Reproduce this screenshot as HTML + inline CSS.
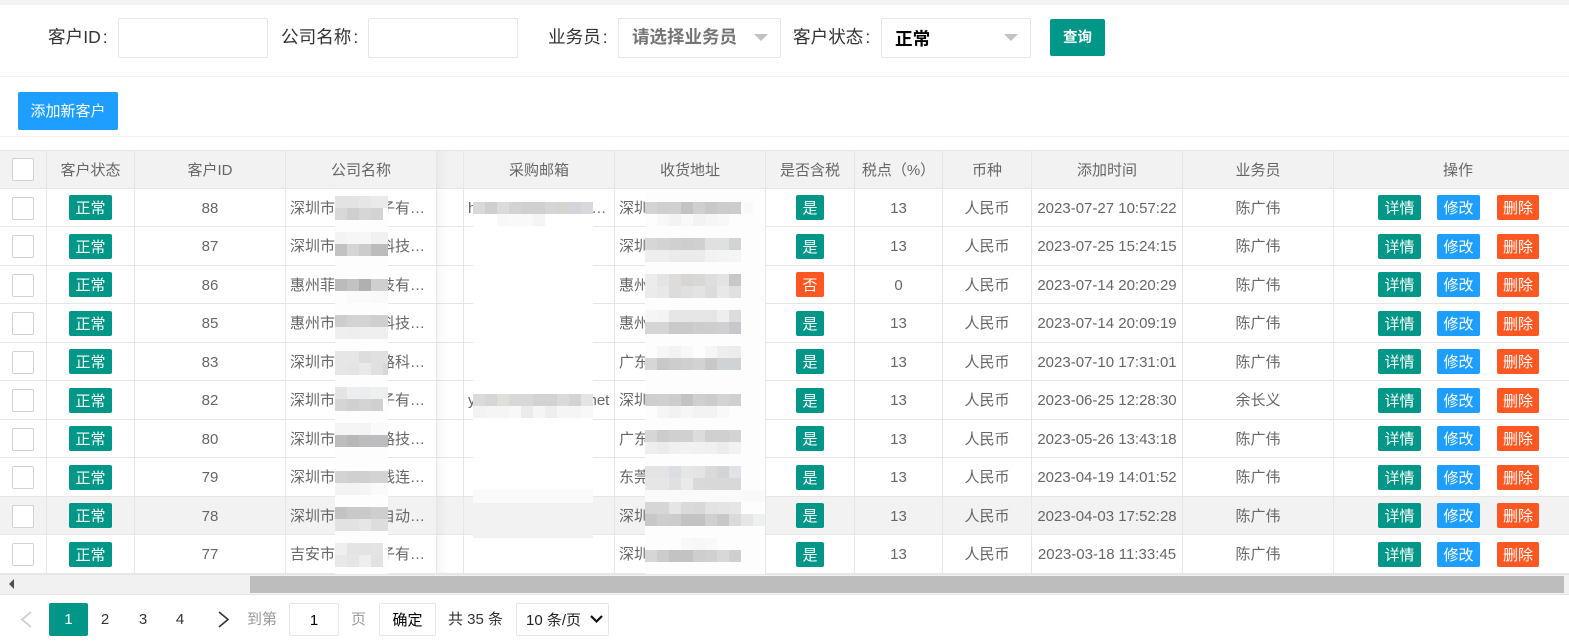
<!DOCTYPE html>
<html lang="zh-CN"><head><meta charset="utf-8"><title>客户列表</title>
<style>
html,body{margin:0;padding:0;background:#fff}
#p{position:relative;width:1569px;height:644px;overflow:hidden;background:#fff;font:15px/1 "Liberation Sans","Noto Sans CJK SC",sans-serif;color:#666}
#p div,#p span.a{position:absolute;box-sizing:border-box;white-space:nowrap}
.box{background:#fff;border:1px solid #e6e6e6;border-radius:2px}
.lb{font-size:17.6px;color:#333;line-height:20px;top:27px}
.lb i{width:2px}
.r{left:0;width:1569px;height:38.5px;border-bottom:1px solid #e6e6e6}
.h{top:150px;height:39px;background:#f2f2f2;border-top:1px solid #e6e6e6}
.h div{line-height:39px}
.r div{top:0;height:100%;line-height:39px;text-align:center;border-right:1px solid #e6e6e6}
.r div.cb,.r div.t,.r div.y,.r div.b{border:0;line-height:27px;height:25px;top:6.5px;color:#fff;border-radius:2px}
.r div.cb{left:12px;width:22px;height:23px;top:8px;background:#fff;border:1px solid #d2d2d2;border-radius:2px}
.h div.cb{top:7px}
.c0{left:0;width:47px}.c1{left:47px;width:88px}.c2{left:135px;width:151px}.c3{left:286px;width:151px}.c4{left:437px;width:27px}.c5{left:464px;width:151px}.c6{left:615px;width:151px}.c7{left:766px;width:89px}.c8{left:855px;width:88px}.c9{left:943px;width:89px}.c10{left:1032px;width:151px}.c11{left:1183px;width:151px}.c12{left:1334px;width:248px}
.r div.l{text-align:left;padding-left:4px;overflow:hidden}
.r div.t{left:69px;width:43px;background:#009688}
.r div.y{left:796px;width:28px;background:#009688}
.r div.n{background:#ff5722}
.r div.b1{left:1378px;width:43px;background:#009688}
.r div.b2{left:1437px;width:43px;background:#1e9fff}
.r div.b3{left:1497px;width:42px;background:#ff5722}
i{display:inline-block}
svg{position:absolute;left:0;top:0}
#m rect{width:12px;height:12px}
.pg{top:603px;line-height:34px;height:33px;text-align:center}
</style></head><body><div id="p">
<div style="left:0;top:0;width:1569px;height:5px;background:#f2f2f2"></div>
<div style="left:0;top:76px;width:1569px;height:1px;background:#f2f2f2"></div>
<div style="left:0;top:136px;width:1569px;height:1px;background:#f2f2f2"></div>

<div class="lb" style="left:48px">客户ID<i></i>:</div>
<div class="box" style="left:118px;top:18px;width:150px;height:40px"></div>
<div class="lb" style="left:281px">公司名称<i></i>:</div>
<div class="box" style="left:368px;top:18px;width:150px;height:40px"></div>
<div class="lb" style="left:548px">业务员<i></i>:</div>
<div class="box" style="left:618px;top:18px;width:163px;height:40px"></div>
<div style="left:632px;top:26px;font-size:17.5px;font-weight:bold;color:#757575;line-height:22px">请选择业务员</div>
<div class="lb" style="left:793px">客户状态<i></i>:</div>
<div class="box" style="left:881px;top:18px;width:150px;height:40px"></div>
<div style="left:895px;top:28px;font-size:17.6px;font-weight:bold;color:#000;line-height:22px">正常</div>
<div style="left:1049px;top:19px;width:55px;height:37px;background:#009688;border-radius:2px;color:#fff;font-size:14.5px;font-weight:bold;line-height:39px;text-align:center;transform:translateX(1px)">查询</div>
<div style="left:18px;top:92px;width:100px;height:38px;background:#1e9fff;border-radius:2px;color:#fff;line-height:39px;text-align:center">添加新客户</div>

<div class="r h"><div class="c0"><div class="cb"></div></div><div class="c1">客户状态</div><div class="c2">客户ID</div><div class="c3">公司名称</div><div class="c4"></div><div class="c5">采购邮箱</div><div class="c6">收货地址</div><div class="c7">是否含税</div><div class="c8">税点（%）</div><div class="c9">币种</div><div class="c10">添加时间</div><div class="c11">业务员</div><div class="c12" style="border:0">操作</div></div>

<div class="r" style="top:188.5px"><div class="c0"></div><div class="cb"></div><div class="c1"></div><div class="t">正常</div><div class="c2">88</div><div class="c3 l">深圳市某某电子有…</div><div class="c4"></div><div class="c5 l">h<i style="width:115px"></i>…</div><div class="c6 l">深圳市</div><div class="c7"></div><div class="y">是</div><div class="c8">13</div><div class="c9">人民币</div><div class="c10">2023-07-27 10:57:22</div><div class="c11">陈广伟</div><div class="b b1">详情</div><div class="b b2">修改</div><div class="b b3">删除</div></div>
<div class="r" style="top:227px"><div class="c0"></div><div class="cb"></div><div class="c1"></div><div class="t">正常</div><div class="c2">87</div><div class="c3 l">深圳市某某电科技…</div><div class="c4"></div><div class="c5 l"></div><div class="c6 l">深圳市</div><div class="c7"></div><div class="y">是</div><div class="c8">13</div><div class="c9">人民币</div><div class="c10">2023-07-25 15:24:15</div><div class="c11">陈广伟</div><div class="b b1">详情</div><div class="b b2">修改</div><div class="b b3">删除</div></div>
<div class="r" style="top:265.5px"><div class="c0"></div><div class="cb"></div><div class="c1"></div><div class="t">正常</div><div class="c2">86</div><div class="c3 l">惠州菲某某科技有…</div><div class="c4"></div><div class="c5 l"></div><div class="c6 l">惠州市</div><div class="c7"></div><div class="y n">否</div><div class="c8">0</div><div class="c9">人民币</div><div class="c10">2023-07-14 20:20:29</div><div class="c11">陈广伟</div><div class="b b1">详情</div><div class="b b2">修改</div><div class="b b3">删除</div></div>
<div class="r" style="top:304px"><div class="c0"></div><div class="cb"></div><div class="c1"></div><div class="t">正常</div><div class="c2">85</div><div class="c3 l">惠州市某某电科技…</div><div class="c4"></div><div class="c5 l"></div><div class="c6 l">惠州市</div><div class="c7"></div><div class="y">是</div><div class="c8">13</div><div class="c9">人民币</div><div class="c10">2023-07-14 20:09:19</div><div class="c11">陈广伟</div><div class="b b1">详情</div><div class="b b2">修改</div><div class="b b3">删除</div></div>
<div class="r" style="top:342.5px"><div class="c0"></div><div class="cb"></div><div class="c1"></div><div class="t">正常</div><div class="c2">83</div><div class="c3 l">深圳市某某网路科…</div><div class="c4"></div><div class="c5 l"></div><div class="c6 l">广东省</div><div class="c7"></div><div class="y">是</div><div class="c8">13</div><div class="c9">人民币</div><div class="c10">2023-07-10 17:31:01</div><div class="c11">陈广伟</div><div class="b b1">详情</div><div class="b b2">修改</div><div class="b b3">删除</div></div>
<div class="r" style="top:381px"><div class="c0"></div><div class="cb"></div><div class="c1"></div><div class="t">正常</div><div class="c2">82</div><div class="c3 l">深圳市某某电子有…</div><div class="c4"></div><div class="c5 l">y<i style="width:113px"></i>net</div><div class="c6 l">深圳市</div><div class="c7"></div><div class="y">是</div><div class="c8">13</div><div class="c9">人民币</div><div class="c10">2023-06-25 12:28:30</div><div class="c11">余长义</div><div class="b b1">详情</div><div class="b b2">修改</div><div class="b b3">删除</div></div>
<div class="r" style="top:419.5px"><div class="c0"></div><div class="cb"></div><div class="c1"></div><div class="t">正常</div><div class="c2">80</div><div class="c3 l">深圳市某某网路技…</div><div class="c4"></div><div class="c5 l"></div><div class="c6 l">广东省</div><div class="c7"></div><div class="y">是</div><div class="c8">13</div><div class="c9">人民币</div><div class="c10">2023-05-26 13:43:18</div><div class="c11">陈广伟</div><div class="b b1">详情</div><div class="b b2">修改</div><div class="b b3">删除</div></div>
<div class="r" style="top:458px"><div class="c0"></div><div class="cb"></div><div class="c1"></div><div class="t">正常</div><div class="c2">79</div><div class="c3 l">深圳市某某无线连…</div><div class="c4"></div><div class="c5 l"></div><div class="c6 l">东莞市</div><div class="c7"></div><div class="y">是</div><div class="c8">13</div><div class="c9">人民币</div><div class="c10">2023-04-19 14:01:52</div><div class="c11">陈广伟</div><div class="b b1">详情</div><div class="b b2">修改</div><div class="b b3">删除</div></div>
<div class="r" style="top:496.5px;background:#f2f2f2"><div class="c0"></div><div class="cb"></div><div class="c1"></div><div class="t">正常</div><div class="c2">78</div><div class="c3 l">深圳市某某自自动…</div><div class="c4"></div><div class="c5 l"></div><div class="c6 l">深圳市</div><div class="c7"></div><div class="y">是</div><div class="c8">13</div><div class="c9">人民币</div><div class="c10">2023-04-03 17:52:28</div><div class="c11">陈广伟</div><div class="b b1">详情</div><div class="b b2">修改</div><div class="b b3">删除</div></div>
<div class="r" style="top:535px"><div class="c0"></div><div class="cb"></div><div class="c1"></div><div class="t">正常</div><div class="c2">77</div><div class="c3 l">吉安市某某电子有…</div><div class="c4"></div><div class="c5 l"></div><div class="c6 l">深圳市</div><div class="c7"></div><div class="y">是</div><div class="c8">13</div><div class="c9">人民币</div><div class="c10">2023-03-18 11:33:45</div><div class="c11">陈广伟</div><div class="b b1">详情</div><div class="b b2">修改</div><div class="b b3">删除</div></div>

<div style="left:437px;top:151px;width:10px;height:423px;background:linear-gradient(90deg,rgba(0,0,0,.035),rgba(0,0,0,0))"></div>

<svg id="m" width="1569" height="644" shape-rendering="crispEdges">
<path fill="#fdfdfd" d="M335 190h53v387h-53zM645 190h120v385h-120z"/>
<path fill="#fff" fill-opacity=".9" d="M473 202h120v288h-120z"/>
<path fill="#fafafa" d="M473 490h120v13h-120z"/>
<path fill="#f2f2f2" d="M473 503h120v35h-120z"/>
<path fill="#fafafa" d="M645 490h120v12h-120z"/>

<rect x="335" y="196" fill="#e3e3e3"/><rect x="347" y="196" fill="#e3e3e3"/><rect x="359" y="196" fill="#e6e6e6"/><rect x="371" y="196" style="width:17px" fill="#eaeaea"/>
<rect x="335" y="208" fill="#d8d8d8"/><rect x="347" y="208" fill="#cfcfcf"/><rect x="359" y="208" fill="#d6d6d6"/><rect x="371" y="208" fill="#d3d3d3"/>
<rect x="335" y="232" fill="#f3f3f3"/><rect x="347" y="232" fill="#f6f6f6"/><rect x="359" y="232" fill="#f7f7f7"/><rect x="371" y="232" style="width:17px" fill="#f1f1f1"/>
<rect x="335" y="244" fill="#c2c2c2"/><rect x="347" y="244" fill="#d5d5d5"/><rect x="359" y="244" fill="#cccccc"/><rect x="371" y="244" style="width:17px" fill="#bcbcbc"/>
<rect x="335" y="279" fill="#bbbbbb"/><rect x="347" y="279" fill="#c4c2c0"/><rect x="359" y="279" fill="#b0b0b0"/><rect x="371" y="279" style="width:17px" fill="#cfcfd1"/>
<rect x="347" y="291" fill="#fafafa"/><rect x="359" y="291" fill="#fafafa"/><rect x="371" y="291" style="width:17px" fill="#f9f9f9"/>
<rect x="335" y="315" fill="#cdcdcd"/><rect x="347" y="315" fill="#d3d3d3"/><rect x="359" y="315" fill="#d3d3d3"/><rect x="371" y="315" style="width:17px" fill="#cfcfcf"/>
<rect x="335" y="327" fill="#efefef"/><rect x="347" y="327" fill="#eceef0"/><rect x="359" y="327" fill="#efefef"/><rect x="371" y="327" style="width:17px" fill="#efefef"/>
<rect x="335" y="351" fill="#e6e6e6"/><rect x="347" y="351" fill="#e6e6e6"/><rect x="359" y="351" fill="#dcdede"/><rect x="371" y="351" style="width:17px" fill="#e0e0e0"/>
<rect x="335" y="363" fill="#e6e6e6"/><rect x="347" y="363" fill="#e4e4e4"/><rect x="359" y="363" fill="#e9e9e9"/><rect x="371" y="363" fill="#e2e0de"/><rect x="383" y="363" style="width:5px" fill="#d6d8de"/>
<rect x="335" y="387" fill="#e4e4e4"/><rect x="347" y="387" fill="#eeeeee"/><rect x="359" y="387" fill="#eaecee"/><rect x="371" y="387" style="width:17px" fill="#eef0f0"/>
<rect x="335" y="399" fill="#d5d5d5"/><rect x="347" y="399" fill="#d0d0ce"/><rect x="359" y="399" fill="#d2d4d6"/><rect x="371" y="399" fill="#d0d0d0"/>
<rect x="335" y="423" fill="#f5f5f5"/><rect x="347" y="423" fill="#f5f5f5"/><rect x="359" y="423" fill="#f3f5f5"/><rect x="371" y="423" style="width:17px" fill="#fafafa"/>
<rect x="335" y="435" fill="#bdbdbd"/><rect x="347" y="435" fill="#b7b7b7"/><rect x="359" y="435" fill="#bdbdbd"/><rect x="371" y="435" style="width:17px" fill="#bdbdc0"/>
<rect x="335" y="471" fill="#d3d3d3"/><rect x="347" y="471" fill="#d0d0d0"/><rect x="359" y="471" fill="#d0d0d0"/><rect x="371" y="471" style="width:17px" fill="#d3d3d3"/>
<rect x="335" y="483" fill="#f3f3f3"/><rect x="347" y="483" fill="#f3f3f3"/><rect x="359" y="483" fill="#f5f5f5"/><rect x="371" y="483" style="width:17px" fill="#fafafa"/>
<rect x="335" y="507" fill="#c3c3c3"/><rect x="347" y="507" fill="#c9c9c9"/><rect x="359" y="507" fill="#c9c9c9"/><rect x="371" y="507" style="width:17px" fill="#cecece"/>
<rect x="335" y="519" fill="#e2e2e2"/><rect x="347" y="519" fill="#e2e2e2"/><rect x="359" y="519" fill="#e6e6e6"/><rect x="371" y="519" style="width:17px" fill="#dddddd"/>
<rect x="335" y="543" fill="#eef0f0"/><rect x="347" y="543" fill="#e6e4e2"/><rect x="359" y="543" fill="#e3e3e3"/><rect x="371" y="543" fill="#e4e4e6"/>
<rect x="335" y="555" fill="#e8e8e8"/><rect x="347" y="555" fill="#e5e5e5"/><rect x="359" y="555" fill="#eeeeee"/><rect x="371" y="555" fill="#e2e2e2"/>

<rect x="473" y="202" fill="#dbd9d6"/><rect x="485" y="202" fill="#cfcfcf"/><rect x="497" y="202" fill="#d8dcdc"/><rect x="509" y="202" fill="#d3d3d3"/><rect x="521" y="202" fill="#d0d0d0"/><rect x="533" y="202" fill="#d0d0d0"/><rect x="545" y="202" fill="#d5d5d5"/><rect x="557" y="202" fill="#d6d4ce"/><rect x="569" y="202" fill="#d2d6da"/><rect x="581" y="202" fill="#d6d8da"/>
<rect x="497" y="214" fill="#f8f8f8"/><rect x="509" y="214" fill="#f9f9f9"/><rect x="521" y="214" fill="#f9f9f9"/><rect x="533" y="214" fill="#f5f5f5"/>
<rect x="473" y="394" fill="#dddbd8"/><rect x="485" y="394" fill="#d6d6da"/><rect x="497" y="394" fill="#e0ded9"/><rect x="509" y="394" fill="#d8d8d8"/><rect x="521" y="394" fill="#d8d8d8"/><rect x="533" y="394" fill="#d2d2d2"/><rect x="545" y="394" fill="#d2d2d2"/><rect x="557" y="394" fill="#dadada"/><rect x="569" y="394" fill="#d3d3d3"/><rect x="581" y="394" fill="#e4e4e4"/>
<rect x="473" y="406" fill="#f3f3f3"/><rect x="485" y="406" fill="#f5f5f5"/><rect x="497" y="406" fill="#f5f5f5"/><rect x="509" y="406" fill="#f8f8f8"/><rect x="521" y="406" fill="#e8ecec"/><rect x="533" y="406" fill="#f5f5f3"/><rect x="545" y="406" fill="#eeeeec"/><rect x="557" y="406" fill="#f3f5f7"/><rect x="569" y="406" fill="#f5f5f5"/><rect x="581" y="406" fill="#f8f8f8"/>

<rect x="645" y="202" fill="#d3d3d3"/><rect x="657" y="202" fill="#cfcfcf"/><rect x="669" y="202" fill="#d0d0d0"/><rect x="681" y="202" fill="#c3c3c3"/><rect x="693" y="202" fill="#cfcfcf"/><rect x="705" y="202" fill="#c8c8c8"/><rect x="717" y="202" fill="#cccccc"/><rect x="729" y="202" fill="#cdcdcd"/><rect x="741" y="202" fill="#fafafa"/>
<rect x="657" y="214" fill="#f8f8f8"/><rect x="669" y="214" fill="#f3f3f3"/><rect x="681" y="214" fill="#f9f9f9"/><rect x="693" y="214" fill="#f3f3f3"/><rect x="705" y="214" fill="#f6f6f6"/><rect x="717" y="214" fill="#f8f8f8"/>
<rect x="645" y="238" fill="#d6d6d6"/><rect x="657" y="238" fill="#d3d3d3"/><rect x="669" y="238" fill="#d0d0d3"/><rect x="681" y="238" fill="#cecece"/><rect x="693" y="238" fill="#d2d0ce"/><rect x="705" y="238" fill="#e0e0e0"/><rect x="717" y="238" fill="#e0e0e0"/><rect x="729" y="238" fill="#d2d3d6"/>
<rect x="645" y="250" fill="#eeeeee"/><rect x="657" y="250" fill="#eeeeee"/><rect x="669" y="250" fill="#ebebeb"/><rect x="681" y="250" fill="#ebebeb"/><rect x="693" y="250" fill="#ebebeb"/><rect x="705" y="250" fill="#f2f2f2"/><rect x="717" y="250" fill="#f3f5f5"/><rect x="729" y="250" fill="#f5f5f5"/>
<rect x="645" y="274" fill="#ececec"/><rect x="657" y="274" fill="#e4e4e4"/><rect x="669" y="274" fill="#dcdcdc"/><rect x="681" y="274" fill="#d8d6d4"/><rect x="693" y="274" fill="#d8d8d6"/><rect x="705" y="274" fill="#dedede"/><rect x="717" y="274" fill="#e4e4e4"/><rect x="729" y="274" fill="#c8c8c8"/>
<rect x="645" y="286" fill="#ebebe9"/><rect x="657" y="286" fill="#e8e8e6"/><rect x="669" y="286" fill="#dcdcdc"/><rect x="681" y="286" fill="#e0e0de"/><rect x="693" y="286" fill="#e2e4e4"/><rect x="705" y="286" fill="#dcdcdc"/><rect x="717" y="286" fill="#e8e8e8"/><rect x="729" y="286" fill="#dfe1e1"/>
<rect x="645" y="310" fill="#f5f5f5"/><rect x="657" y="310" fill="#f2f4f4"/><rect x="669" y="310" fill="#e6e6e6"/><rect x="681" y="310" fill="#e6e6e6"/><rect x="693" y="310" fill="#e6e6e6"/><rect x="705" y="310" fill="#e4e6e6"/><rect x="717" y="310" fill="#eeeeee"/><rect x="729" y="310" fill="#dcdcdc"/>
<rect x="645" y="322" fill="#d5d5d5"/><rect x="657" y="322" fill="#d5d5d5"/><rect x="669" y="322" fill="#cacaca"/><rect x="681" y="322" fill="#cacaca"/><rect x="693" y="322" fill="#cdcdcd"/><rect x="705" y="322" fill="#cecece"/><rect x="717" y="322" fill="#d0d0d0"/><rect x="729" y="322" fill="#c8c8cc"/>
<rect x="657" y="346" fill="#f6f6f6"/><rect x="669" y="346" fill="#f2f2f2"/><rect x="681" y="346" fill="#f8f8f8"/><rect x="705" y="346" fill="#f6f6f6"/><rect x="717" y="346" fill="#eeeeee"/><rect x="729" y="346" fill="#ececec"/>
<rect x="645" y="358" fill="#d6d6d6"/><rect x="657" y="358" fill="#c8c8c8"/><rect x="669" y="358" fill="#cdcdd0"/><rect x="681" y="358" fill="#cfcfcf"/><rect x="693" y="358" fill="#d2d2d0"/><rect x="705" y="358" fill="#c8c8c8"/><rect x="717" y="358" fill="#d0d3d6"/><rect x="729" y="358" fill="#d0d3d6"/>
<rect x="645" y="394" fill="#d0cecc"/><rect x="657" y="394" fill="#d0d0d0"/><rect x="669" y="394" fill="#cdcdcd"/><rect x="681" y="394" fill="#c3c3c3"/><rect x="693" y="394" fill="#d0cece"/><rect x="705" y="394" fill="#cccccc"/><rect x="717" y="394" fill="#d3d3d3"/><rect x="729" y="394" fill="#d0d0d3"/>
<rect x="657" y="406" fill="#f6f6f6"/><rect x="669" y="406" fill="#f2f2f2"/><rect x="681" y="406" fill="#f7f7f7"/><rect x="693" y="406" fill="#f3f3f3"/><rect x="705" y="406" fill="#f3f3f3"/><rect x="717" y="406" fill="#f9f9f9"/>
<rect x="645" y="430" fill="#d6d6d6"/><rect x="657" y="430" fill="#cccccc"/><rect x="669" y="430" fill="#ced0d2"/><rect x="681" y="430" fill="#d0d0d0"/><rect x="693" y="430" fill="#dcdcda"/><rect x="705" y="430" fill="#d0d0d0"/><rect x="717" y="430" fill="#d0d0d3"/><rect x="729" y="430" fill="#d3d3d3"/>
<rect x="645" y="442" fill="#eeeeee"/><rect x="657" y="442" fill="#e8ecec"/><rect x="669" y="442" fill="#f0f0f0"/><rect x="681" y="442" fill="#f2f2f2"/><rect x="693" y="442" fill="#f1f1f1"/><rect x="705" y="442" fill="#f0f0f0"/><rect x="717" y="442" fill="#ececec"/><rect x="729" y="442" fill="#f2f2f2"/>
<rect x="645" y="466" fill="#e4e4e4"/><rect x="657" y="466" fill="#e4e4e4"/><rect x="669" y="466" fill="#dcdee2"/><rect x="681" y="466" fill="#e6e6e6"/><rect x="693" y="466" fill="#e4e4e4"/><rect x="705" y="466" fill="#dadada"/><rect x="717" y="466" fill="#d4d4d4"/><rect x="729" y="466" fill="#e0e2e6"/>
<rect x="645" y="478" fill="#e6e6e6"/><rect x="657" y="478" fill="#e6e6e6"/><rect x="669" y="478" fill="#dfe1e1"/><rect x="681" y="478" fill="#eaeae8"/><rect x="693" y="478" fill="#d9d9d9"/><rect x="705" y="478" fill="#d8d8d8"/><rect x="717" y="478" fill="#d8d8d8"/><rect x="729" y="478" fill="#d6d8dc"/>
<rect x="645" y="502" fill="#d6d6d6"/><rect x="657" y="502" fill="#d6d6d6"/><rect x="669" y="502" fill="#e4e6e6"/><rect x="681" y="502" fill="#dcdad8"/><rect x="693" y="502" fill="#d8d8d6"/><rect x="705" y="502" fill="#e2e2e2"/><rect x="717" y="502" fill="#e4e4e4"/><rect x="729" y="502" fill="#e6e6e6"/>
<rect x="645" y="514" fill="#c8c8c8"/><rect x="657" y="514" fill="#cecece"/><rect x="669" y="514" fill="#cccccc"/><rect x="681" y="514" fill="#c3c3c3"/><rect x="693" y="514" fill="#c3c3c3"/><rect x="705" y="514" fill="#d0d0d0"/><rect x="717" y="514" fill="#c8c8c8"/><rect x="729" y="514" fill="#dadada"/><rect x="741" y="514" fill="#e6e6e6"/><rect x="753" y="514" fill="#eef0f0"/>
<rect x="681" y="538" fill="#f8f8f8"/><rect x="693" y="538" fill="#f6f8f8"/><rect x="705" y="538" fill="#f9f9f9"/>
<rect x="645" y="550" fill="#d6d6d6"/><rect x="657" y="550" fill="#cccccc"/><rect x="669" y="550" fill="#c3c3c1"/><rect x="681" y="550" fill="#c3c3c1"/><rect x="693" y="550" fill="#cecece"/><rect x="705" y="550" fill="#d0d0d0"/><rect x="717" y="550" fill="#d8d8d8"/><rect x="729" y="550" fill="#cfcfcf"/>
</svg>

<div style="left:0;top:574px;width:1569px;height:21px;background:#f1f1f1;border-top:1px solid #e6e6e6;border-bottom:1px solid #e6e6e6"></div>
<div style="left:250px;top:576px;width:1314px;height:17px;background:#bdbdbd"></div>
<svg width="20" height="644" style="left:0"><path d="M14 579v10l-5-5z" fill="#505050"/></svg>

<svg width="300" height="644"><path d="M31 612l-9 7.500 9 7.500" fill="none" stroke="#d2d2d2" stroke-width="2"/><path d="M219 612l9 7.500-9 7.500" fill="none" stroke="#333" stroke-width="1.600"/></svg>
<div class="pg" style="left:49px;width:39px;background:#009688;color:#fff;border-radius:2px;font-size:15px">1</div>
<div class="pg" style="left:95px;width:20px;color:#333">2</div>
<div class="pg" style="left:133px;width:20px;color:#333">3</div>
<div class="pg" style="left:170px;width:20px;color:#333">4</div>
<div class="pg" style="left:247px;color:#999">到第</div>
<div class="pg box" style="left:289px;width:50px;color:#000;line-height:33px;font-size:15px">1</div>
<div class="pg" style="left:351px;color:#999">页</div>
<div class="pg box" style="left:379px;width:57px;color:#000;line-height:33px;font-size:15px">确定</div>
<div class="pg" style="left:448px;color:#333">共 35 条</div>
<div class="pg box" style="left:516px;width:93px;color:#222;text-align:left;padding-left:9px;line-height:33px">10 条/页</div>
<svg width="1569" height="644"><path d="M591 616l5.500 5.500 5.500-5.500" fill="none" stroke="#111" stroke-width="2.200"/></svg>

<svg width="1569" height="644"><path d="M754 34h14l-7 7zM1004 34h14l-7 7z" fill="#c2c2c2"/></svg>
</div></body></html>
